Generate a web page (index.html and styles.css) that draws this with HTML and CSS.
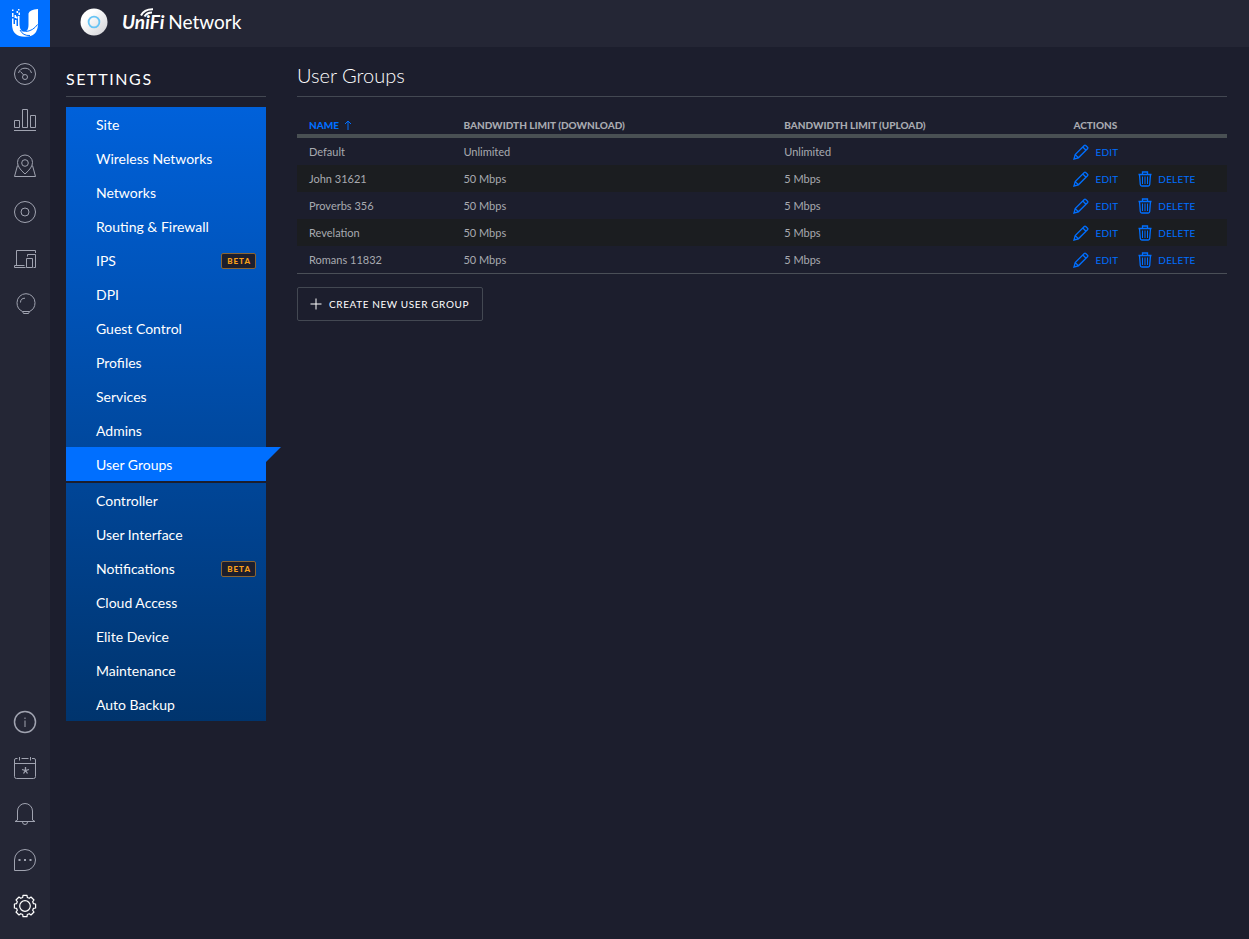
FILE: index.html
```html
<!DOCTYPE html>
<html lang="en">
<head>
<meta charset="utf-8">
<title>UniFi Network - User Groups</title>
<link rel="stylesheet" href="styles.css">
</head>
<body>
<svg class="sprite" aria-hidden="true">
  <symbol id="pencil" viewBox="0 0 16 16"><path d="M1 15l1.200-4.400L11.300 1.500q.7-.7 1.400 0l1.800 1.800q.7.700 0 1.400L5.400 13.800zM9.800 3l3.200 3.200M2.200 10.600l3.200 3.200"/></symbol>
  <symbol id="trash" viewBox="0 0 14 16"><path d="M.5 3.500h13M4.500 3V1h5v2M1.500 3.500l.8 10q.1 1.500 1.500 1.500h6.400q1.400 0 1.500-1.500l.8-10"/><path stroke-width="1" d="M4.500 5.500v7.500M7 5.500v7.500M9.500 5.500v7.500"/></symbol>
</svg>
<div class="app">
  <nav class="rail" aria-label="Main">
    <a class="brand" href="#" aria-label="Ubiquiti">
      <svg width="28" height="30" viewBox="0 0 28 30">
        <path fill="#fff" d="M17.500 4.500Q18.500 .8 27 0V14.500Q27 27.800 14 27.800Q1 27.800 1 15V9.500H2.500V15H4V11H5.500V17H7V7H8.500V15.500Q8.500 20 10.500 21.800Q12.200 23 14.500 22.500Q17.500 21.200 17.500 16z"/>
        <path fill="#fff" d="M1 .5h1.500V2H1zM1 4h1.500v4H1zM3.500 6H5v3H3.500zM5.500 2H7v2H5.500zM7 0h1.500v1.500H7zM7.500 3.500H9V6H7.500zM5 7.500h1.500v2H5z"/>
        <path fill="none" stroke="#006fff" stroke-width="1" d="M9 21Q12 27 19 26.500M14.500 22.500Q22 22 26.500 15.500"/>
      </svg>
    </a>
    <div class="rail-group">
      <a href="#" aria-label="Dashboard"><svg viewBox="0 0 24 24"><circle cx="12" cy="12" r="10.500"/><path d="M5.500 11Q7 6.200 12 6.200T18.500 11M7.500 9.500l3.300 3.700"/><circle cx="12" cy="15" r="2.500"/></svg></a>
      <a href="#" aria-label="Statistics"><svg viewBox="0 0 24 24"><path d="M1 22.500h22M1.500 19.500v-7h5v7zM9.500 19.500v-18h5v18zM17.500 19.500v-12h5v12z"/></svg></a>
      <a href="#" aria-label="Map"><svg viewBox="0 0 24 24"><path d="M12 20Q4.500 13.500 4.500 8.500a7.500 7.500 0 0 1 15 0Q19.500 13.500 12 20zM4.500 11.500L1.500 22.500h21l-3-11"/><circle cx="12" cy="9" r="3.300"/></svg></a>
      <a href="#" aria-label="Devices"><svg viewBox="0 0 24 24"><circle cx="12" cy="12" r="10.500"/><circle cx="12" cy="12" r="4"/></svg></a>
      <a href="#" aria-label="Clients"><svg viewBox="0 0 24 24"><path d="M3.500 19V4.500h19V7M1.500 19.500h10M1.500 19.500v2h11M14.500 10.500V8.500h8v13h-2M13.500 12.500h6v9h-6z"/></svg></a>
      <a href="#" aria-label="Insights"><svg viewBox="0 0 24 24"><path d="M9.500 19.500Q4 17 4 10.700a9 9 0 0 1 18 0Q22 17 16.500 19.500M9.500 19.500h7l-1 2h-5zM7.500 10.500Q7.500 6.200 12 6.200"/></svg></a>
    </div>
    <div class="rail-group rail-bottom">
      <a href="#" aria-label="Information"><svg viewBox="0 0 24 24"><circle cx="12" cy="12" r="10.500" stroke-width="1.500"/><path d="M12 10.500v6.500M12 7.500v1.500"/></svg></a>
      <a href="#" aria-label="Events"><svg viewBox="0 0 24 24"><path d="M4.500 2.500H3Q1.500 2.500 1.500 4v16.500Q1.500 22.500 3.500 22.500h17q2 0 2-2V4q0-1.500-1.500-1.500h-2M8.500 2.500h7M6.500 1v3.500M17.500 1v3.500M1.500 7.500h21"/><path stroke-width="1.300" d="M12.500 11v3.500M9 13.500l3.500 1 3.500-1M10.500 17.500l2-3 2 3"/></svg></a>
      <a href="#" aria-label="Alerts"><svg viewBox="0 0 24 24"><path d="M4.500 18V9a7.500 7.500 0 0 1 15 0V18l2.500 1.500H2zM9.500 20a2.500 2.500 0 0 0 5 0"/></svg></a>
      <a href="#" aria-label="Chat"><svg viewBox="0 0 24 24"><path d="M1.500 22.500V12a10.500 10.500 0 1 1 10.500 10.500z"/><path stroke-width="2" d="M5.500 12h2M11 12h2M16.500 12h2"/></svg></a>
      <a class="current" href="#" aria-label="Settings"><svg viewBox="0 0 24 24"><path stroke-width="1.200" d="M9.700 3.500L10 1.400h4l.3 2.100 2 .8L18 3l3 3-1.300 1.700.8 2 2.100.3v4l-2.100.3-.8 2L21 18l-3 3-1.700-1.300-2 .8-.3 2.100h-4l-.3-2.100-2-.8L6 21l-3-3 1.300-1.700-.8-2L1.400 14v-4l2.100-.3.8-2L3 6l3-3 1.700 1.300z" stroke-linejoin="round"/><circle cx="12" cy="12" r="5.300" stroke-width="1.200"/></svg></a>
    </div>
  </nav>
  <div class="page">
    <header class="topbar">
      <svg class="device" viewBox="0 0 28 28" aria-hidden="true">
        <defs><linearGradient id="disc" x2="1" y2="1"><stop offset=".3" stop-color="#fff"/><stop offset="1" stop-color="#cfcfd3"/></linearGradient></defs>
        <circle cx="14" cy="14" r="13.500" fill="url(#disc)"/><circle cx="14" cy="14" r="5.400" fill="none" stroke="#67c4f5" stroke-width="1.800"/>
      </svg>
      <div class="wordmark"><span class="unifi">UniFi<svg class="waves" viewBox="0 0 14 9" aria-hidden="true"><path d="M1 7.500Q4 1 13 1.200M4.500 8.500Q7 4.500 12 4.500"/></svg></span><span class="product">Network</span></div>
    </header>
    <div class="body">
      <aside class="settings">
        <h2>SETTINGS</h2>
        <ul class="menu">
          <li><a href="#">Site</a></li>
          <li><a href="#">Wireless Networks</a></li>
          <li><a href="#">Networks</a></li>
          <li><a href="#">Routing &amp; Firewall</a></li>
          <li><a href="#">IPS<span class="beta">BETA</span></a></li>
          <li><a href="#">DPI</a></li>
          <li><a href="#">Guest Control</a></li>
          <li><a href="#">Profiles</a></li>
          <li><a href="#">Services</a></li>
          <li><a href="#">Admins</a></li>
          <li class="active"><a href="#" aria-current="page">User Groups</a></li>
          <li><a href="#">Controller</a></li>
          <li><a href="#">User Interface</a></li>
          <li><a href="#">Notifications<span class="beta">BETA</span></a></li>
          <li><a href="#">Cloud Access</a></li>
          <li><a href="#">Elite Device</a></li>
          <li><a href="#">Maintenance</a></li>
          <li><a href="#">Auto Backup</a></li>
        </ul>
      </aside>
      <main class="content">
        <h1>User Groups</h1>
        <table class="groups">
          <colgroup><col class="c-name"><col class="c-down"><col class="c-up"><col></colgroup>
          <thead><tr>
            <th class="sorted" aria-sort="ascending">NAME<svg viewBox="0 0 8 10" aria-hidden="true"><path d="M4 10V1M1 4l3-3 3 3"/></svg></th>
            <th>BANDWIDTH LIMIT (DOWNLOAD)</th><th>BANDWIDTH LIMIT (UPLOAD)</th><th>ACTIONS</th>
          </tr></thead>
          <tbody>
            <tr><td>Default</td><td>Unlimited</td><td>Unlimited</td><td><div class="actions"><button><svg><use href="#pencil"/></svg>EDIT</button></div></td></tr>
            <tr><td>John 31621</td><td>50 Mbps</td><td>5 Mbps</td><td><div class="actions"><button><svg><use href="#pencil"/></svg>EDIT</button><button><svg class="bin"><use href="#trash"/></svg>DELETE</button></div></td></tr>
            <tr><td>Proverbs 356</td><td>50 Mbps</td><td>5 Mbps</td><td><div class="actions"><button><svg><use href="#pencil"/></svg>EDIT</button><button><svg class="bin"><use href="#trash"/></svg>DELETE</button></div></td></tr>
            <tr><td>Revelation</td><td>50 Mbps</td><td>5 Mbps</td><td><div class="actions"><button><svg><use href="#pencil"/></svg>EDIT</button><button><svg class="bin"><use href="#trash"/></svg>DELETE</button></div></td></tr>
            <tr><td>Romans 11832</td><td>50 Mbps</td><td>5 Mbps</td><td><div class="actions"><button><svg><use href="#pencil"/></svg>EDIT</button><button><svg class="bin"><use href="#trash"/></svg>DELETE</button></div></td></tr>
          </tbody>
        </table>
        <button class="create"><svg viewBox="0 0 12 12" aria-hidden="true"><path d="M6 .5v11M.5 6h11"/></svg>CREATE NEW USER GROUP</button>
      </main>
    </div>
  </div>
</div>
</body>
</html>
```
FILE: styles.css
```css
* { box-sizing: border-box; }
body { margin: 0; background: #1c1e2d; color: #fff; font-family: Lato, "Open Sans", sans-serif; }
a { color: inherit; text-decoration: none; }
button { font-family: inherit; cursor: pointer; }
svg { fill: none; stroke: currentColor; flex: none; }
.sprite { display: none; }

.app { display: flex; min-height: 100vh; }
.rail { width: 50px; flex: none; display: flex; flex-direction: column; background: #242635; color: #a0a3b0; }
.brand { height: 47px; display: flex; align-items: center; justify-content: center; background: #006fff; }
.brand svg { stroke: none; }
.rail-group { display: flex; flex-direction: column; padding-top: 4px; }
.rail-group a { height: 46px; display: flex; align-items: center; justify-content: center; }
.rail-group svg { width: 24px; height: 24px; }
.rail-bottom { margin-top: auto; padding: 0 0 10px; }
.rail .current { color: #fff; }

.page { flex: 1; min-width: 0; }
.topbar { height: 47px; display: flex; align-items: center; gap: 14px; padding: 0 30px 4px; background: #242635; }
.device { width: 28px; height: 28px; stroke: none; }
.wordmark { display: flex; align-items: baseline; gap: 4px; font-size: 19px; line-height: 24px; }
.unifi { position: relative; font-style: italic; font-weight: bold; }
.waves { position: absolute; right: 10px; top: -2px; width: 14px; height: 9px; stroke-width: 2; }

.body { display: flex; gap: 31px; padding: 20px 22px 20px 16px; }
.settings { width: 200px; flex: none; }
h1, h2 { margin: 0; font-weight: 400; border-bottom: 1px solid #434852; height: 30px; line-height: 24px; }
h2 { font-size: 16px; letter-spacing: 0.1em; margin-bottom: 10px; }
h1 { font-size: 20px; font-weight: 300; line-height: 16px; }
.menu { list-style: none; margin: 0; padding: 0; background: linear-gradient(#0061da, #00346d); font-size: 14px; }
.menu a { height: 34px; display: flex; align-items: center; justify-content: space-between; padding: 2px 10px 0 30px; line-height: 20px; }
.active { position: relative; background: #006fff; border-bottom: 2px solid #1c1e2d; }
.active::after { content: ""; position: absolute; left: 100%; top: 0; width: 15px; height: 15px; background: #006fff; clip-path: polygon(0 0, 100% 0, 0 100%); }
.beta { display: flex; align-items: center; height: 16px; padding: 0 4px 0 5px; border: 1px solid #8a6534; border-radius: 2px; background: #1c1e2d; color: #f9a01b; font-size: 8px; font-weight: 900; letter-spacing: 1px; line-height: 12px; }

.content { flex: 1; min-width: 0; }
.groups { width: 100%; margin-top: 18px; table-layout: fixed; border-collapse: separate; border-spacing: 0; border-bottom: 1px solid #4a4f57; font-size: 11px; color: #a8aab0; }
.c-name { width: 16.600%; }
.c-down { width: 34.500%; }
.c-up { width: 31.100%; }
.groups th { height: 23px; padding: 0 12px; border-bottom: 4px solid #495053; text-align: left; font-size: 10px; font-weight: 900; line-height: 14px; }
.groups td { height: 27px; padding: 0 12px; line-height: 16px; }
.groups tbody tr:nth-child(even) { background: #1b1d20; }
.groups .sorted { color: #006fff; }
.sorted svg { width: 8px; height: 10px; margin-left: 5px; vertical-align: -1px; }
.actions { display: flex; gap: 20px; }
.actions button { display: flex; align-items: center; gap: 6px; height: 16px; padding: 0; border: 0; background: none; color: #006fff; font-size: 10px; line-height: 16px; letter-spacing: 0.02em; }
.actions svg { width: 16px; height: 16px; stroke-width: 1.3; }
.actions .bin { width: 14px; }
.create { display: flex; align-items: center; gap: 7px; height: 34px; margin-top: 13px; padding: 0 13px 0 12px; border: 1px solid #434852; border-radius: 2px; background: none; color: #fff; font-size: 10px; line-height: 16px; letter-spacing: 0.06em; }
.create svg { width: 12px; height: 12px; }
```
